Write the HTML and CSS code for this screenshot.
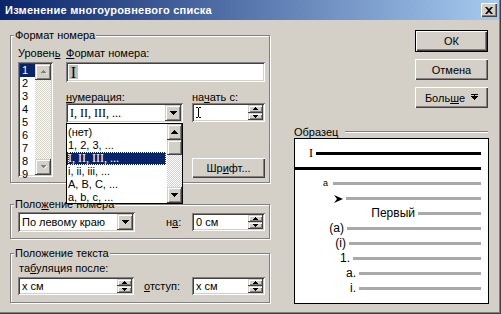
FILE: index.html
```html
<!DOCTYPE html>
<html lang="ru">
<head>
<meta charset="utf-8">
<title>Изменение многоуровневого списка</title>
<link rel="stylesheet" href="styles.css">
</head>
<body>
<div class="win">
  <div class="titlebar">
    <span class="title-text">Изменение многоуровневого списка</span>
    <span class="close raised">
      <svg width="8" height="7" viewBox="0 0 8 7"><path d="M0 0h2l2 2 2-2h2L5 3.5 8 7H6L4 5 2 7H0l3-3.5z" fill="#000"/></svg>
    </span>
  </div>
  <div class="content">
    <div class="left">
      <div class="grp g1">
        <div class="legend">Формат номера</div>
        <div class="g1-body">
          <div class="col-level">
            <div class="lbl">Уровен<u>ь</u></div>
            <div class="listbox sunken">
              <div class="lb-items">
                <div class="lb-item sel">1</div>
                <div class="lb-item">2</div>
                <div class="lb-item">3</div>
                <div class="lb-item">4</div>
                <div class="lb-item">5</div>
                <div class="lb-item">6</div>
                <div class="lb-item">7</div>
                <div class="lb-item">8</div>
                <div class="lb-item">9</div>
              </div>
              <div class="vscroll">
                <div class="sbtn raised2"><svg width="9" height="6" viewBox="0 0 9 6"><path d="M4 1h1v1h1v1h1v1h-5v-1h1v-1h1z" fill="#808080"/><path d="M3 5h5v-1h-1v1z" fill="#fff"/></svg></div>
                <div class="track"></div>
                <div class="sbtn raised2"><svg width="9" height="6" viewBox="0 0 9 6"><path d="M2 1h5v1h-1v1h-1v1h-1v-1h-1v-1h-1z" fill="#808080"/><path d="M5 4h1v-1h1v-1h1v1h-1v1h-1v1h-1z" fill="#fff"/></svg></div>
              </div>
            </div>
          </div>
          <div class="col-format">
            <div class="lbl"><u>Ф</u>ормат номера:</div>
            <div class="field sunken fmt"><span class="fmt-i">I</span></div>
            <div class="num-row">
              <div class="num-col">
                <div class="lbl lbl-s"><u>н</u>умерация:</div>
                <div class="combo sunken">
                  <span class="combo-val serif">I, II, III, ...</span>
                  <span class="dbtn raised2"><svg width="7" height="4" viewBox="0 0 7 4"><path d="M0 0h7v1h-1v1h-1v1h-1v1h-1v-1h-1v-1h-1v-1h-1z" fill="#000"/></svg></span>
                </div>
                <div class="droplist">
                  <div class="dl-items">
                    <div class="dl-item">(нет)</div>
                    <div class="dl-item">1, 2, 3, ...</div>
                    <div class="dl-item sel serif"><span class="focus">I, II, III, ...</span></div>
                    <div class="dl-item">i, ii, iii, ...</div>
                    <div class="dl-item">A, B, C, ...</div>
                    <div class="dl-item">a, b, c, ...</div>
                  </div>
                  <div class="vscroll dl-scroll">
                    <div class="sbtn raised2"><svg width="7" height="4" viewBox="0 0 7 4"><path d="M3 0h1v1h1v1h1v1h1v1h-7v-1h1v-1h1v-1h1z" fill="#000"/></svg></div>
                    <div class="thumb raised2"></div>
                    <div class="track"></div>
                    <div class="sbtn raised2"><svg width="7" height="4" viewBox="0 0 7 4"><path d="M0 0h7v1h-1v1h-1v1h-1v1h-1v-1h-1v-1h-1v-1h-1z" fill="#000"/></svg></div>
                  </div>
                </div>
              </div>
              <div class="start-col">
                <div class="lbl lbl-s">на<u>ч</u>ать с:</div>
                <div class="spin sunken spin-start">
                  <span class="spin-val"><svg width="5" height="11" viewBox="0 0 5 11"><path d="M0 .5h2M3 .5h2M2.5 1v9M0 10.5h2M3 10.5h2" stroke="#000" stroke-width="1" fill="none"/></svg></span>
                  <span class="spin-btns">
                    <span class="spb raised2"><svg width="5" height="3" viewBox="0 0 5 3"><path d="M2 0h1v1h1v1h1v1h-5v-1h1v-1h1z" fill="#000"/></svg></span>
                    <span class="spb raised2"><svg width="5" height="3" viewBox="0 0 5 3"><path d="M0 0h5v1h-1v1h-1v1h-1v-1h-1v-1h-1z" fill="#000"/></svg></span>
                  </span>
                </div>
                <div class="btn raised font-btn">Шр<u>и</u>фт...</div>
              </div>
            </div>
          </div>
        </div>
      </div>

      <div class="grp g2">
        <div class="legend">Поло<u>ж</u>ение номера</div>
        <div class="row-body g2-body">
          <div class="combo sunken combo-align">
            <span class="combo-val">По левому краю</span>
            <span class="dbtn raised2"><svg width="7" height="4" viewBox="0 0 7 4"><path d="M0 0h7v1h-1v1h-1v1h-1v1h-1v-1h-1v-1h-1v-1h-1z" fill="#000"/></svg></span>
          </div>
          <div class="lbl lbl-na">н<u>а</u>:</div>
          <div class="spin sunken">
            <span class="spin-val">0 см</span>
            <span class="spin-btns">
              <span class="spb raised2"><svg width="5" height="3" viewBox="0 0 5 3"><path d="M2 0h1v1h1v1h1v1h-5v-1h1v-1h1z" fill="#000"/></svg></span>
              <span class="spb raised2"><svg width="5" height="3" viewBox="0 0 5 3"><path d="M0 0h5v1h-1v1h-1v1h-1v-1h-1v-1h-1z" fill="#000"/></svg></span>
            </span>
          </div>
        </div>
      </div>

      <div class="grp g3">
        <div class="legend">Положение текста</div>
        <div class="g3-body">
          <div class="lbl lbl-tab">та<u>б</u>уляция после:</div>
          <div class="row-body g3-row">
            <div class="spin sunken spin-tab">
              <span class="spin-val">x см</span>
              <span class="spin-btns">
                <span class="spb raised2"><svg width="5" height="3" viewBox="0 0 5 3"><path d="M2 0h1v1h1v1h1v1h-5v-1h1v-1h1z" fill="#000"/></svg></span>
                <span class="spb raised2"><svg width="5" height="3" viewBox="0 0 5 3"><path d="M0 0h5v1h-1v1h-1v1h-1v-1h-1v-1h-1z" fill="#000"/></svg></span>
              </span>
            </div>
            <div class="lbl lbl-ind"><u>о</u>тступ:</div>
            <div class="spin sunken">
              <span class="spin-val">x см</span>
              <span class="spin-btns">
                <span class="spb raised2"><svg width="5" height="3" viewBox="0 0 5 3"><path d="M2 0h1v1h1v1h1v1h-5v-1h1v-1h1z" fill="#000"/></svg></span>
                <span class="spb raised2"><svg width="5" height="3" viewBox="0 0 5 3"><path d="M0 0h5v1h-1v1h-1v1h-1v-1h-1v-1h-1z" fill="#000"/></svg></span>
              </span>
            </div>
          </div>
        </div>
      </div>
    </div>

    <div class="right">
      <div class="btns">
        <div class="btn raised default">ОК</div>
        <div class="btn raised">Отмена</div>
        <div class="btn raised">Боль<u>ш</u>е <svg class="more-ico" width="7" height="7" viewBox="0 0 7 7"><path d="M0 0h7v1h-7z M3 1h1v1h-1z M0 2h7v1h-1v1h-1v1h-1v1h-1v-1h-1v-1h-1v-1h-1z" fill="#000"/></svg></div>
      </div>
      <div class="sample-head">
        <span>Образец</span>
        <span class="etched"></span>
      </div>
      <div class="preview">
        <div class="prow r1"><span class="mk serif">I</span><span class="ln black"></span></div>
        <div class="prow r2"><span class="mk"></span><span class="ln black"></span></div>
        <div class="prow r3"><span class="mk small">a</span><span class="ln"></span></div>
        <div class="prow r4"><span class="mk"><svg width="9" height="8" viewBox="0 0 9 8"><path d="M0 0L9 4L0 8L3 4Z" fill="#000"/></svg></span><span class="ln"></span></div>
        <div class="prow r5"><span class="mk">Первый</span><span class="ln"></span></div>
        <div class="prow r6"><span class="mk">(a)</span><span class="ln"></span></div>
        <div class="prow r7"><span class="mk">(i)</span><span class="ln"></span></div>
        <div class="prow r8"><span class="mk">1.</span><span class="ln"></span></div>
        <div class="prow r9"><span class="mk">a.</span><span class="ln"></span></div>
        <div class="prow r10"><span class="mk">i.</span><span class="ln"></span></div>
      </div>
    </div>
  </div>
</div>
</body>
</html>
```

FILE: styles.css
```css
* { box-sizing: border-box; }
html, body { margin: 0; padding: 0; }
body {
  width: 501px; height: 314px; overflow: hidden;
  font: 11px "Liberation Sans", Arial, sans-serif;
  color: #000; background: #d4d0c8;
}
u { text-decoration: underline; text-underline-offset: 1px; }
.serif { font-family: "Liberation Serif", "Times New Roman", serif; }

.win {
  width: 501px; height: 314px; background: #d4d0c8;
  display: flex; flex-direction: column;
  box-shadow: inset -1px -1px #404040, inset -2px -2px #808080;
}
.titlebar {
  height: 20px; margin-right: 2px;
  background: linear-gradient(90deg, #0a246a, #a6caf0);
  display: flex; align-items: center; justify-content: space-between;
  padding: 0 2px 0 5px;
  color: #fff; font-weight: bold; font-size: 11px;
}
.title-text { letter-spacing: 0.25px; }
.close {
  width: 16px; height: 14px;
  display: flex; align-items: center; justify-content: center;
  background: #d4d0c8;
}

.raised {
  background: #d4d0c8;
  box-shadow: inset 1px 1px #fff, inset -1px -1px #404040, inset -2px -2px #808080;
}
.raised2 {
  background: #d4d0c8;
  box-shadow: inset -1px -1px #404040, inset 1px 1px #d4d0c8, inset 2px 2px #fff, inset -2px -2px #808080;
}
.sunken {
  background: #fff;
  box-shadow: inset 1px 1px #808080, inset -1px -1px #fff, inset 2px 2px #404040, inset -2px -2px #d4d0c8;
}

.content { display: flex; padding-left: 10px; flex: 1; }
.left { width: 260px; display: flex; flex-direction: column; }

.grp {
  border: 1px solid #808080;
  box-shadow: inset 1px 1px #fff, 1px 1px #fff;
}
.legend {
  width: max-content; height: 13px; line-height: 13px;
  margin: -7px 0 0 3px; padding: 0 1px;
  background: #d4d0c8; white-space: nowrap;
}
.lbl { height: 13px; line-height: 13px; white-space: nowrap; }
.lbl-s { height: 12px; line-height: 12px; }

.g1 { margin-top: 15px; height: 148px; }
.g1-body { display: flex; padding: 5px 0 0 7px; }
.col-level { width: 35px; }
.listbox { margin-top: 2px; height: 115px; display: flex; padding: 2px; }
.lb-items { width: 15px; }
.lb-item { height: 13px; line-height: 13px; padding-left: 2px; }
.sel { background: #0a246a; color: #fff; }
.vscroll { width: 16px; display: flex; flex-direction: column; }
.sbtn { height: 16px; display: flex; align-items: center; justify-content: center; }
.track {
  flex: 1;
  background: repeating-conic-gradient(#d4d0c8 0 25%, #fff 0 50%) 0 0 / 2px 2px;
}
.thumb { height: 15px; }

.col-format { width: 199px; margin-left: 13px; }
.field { height: 20px; }
.fmt { margin-top: 2px; padding: 3px 0 0 3px; }
.fmt-i {
  display: inline-block; height: 14px; width: 9px;
  background: #c0c0c0; text-align: center;
  font: 16px/15px "Liberation Serif", "Times New Roman", serif;
}
.num-row { display: flex; margin-top: 9px; }
.num-col { width: 117px; position: relative; }
.combo { height: 20px; display: flex; align-items: center; padding: 2px; }
.combo-val { flex: 1; padding-left: 2px; white-space: nowrap; overflow: hidden; }
.num-col .combo-val { font-size: 12px; }
.dbtn { width: 16px; height: 16px; display: flex; align-items: center; justify-content: center; }

.droplist {
  position: absolute; left: 0; top: 32px; width: 117px; height: 81px;
  background: #fff; border: 1px solid #000; z-index: 5;
  display: flex;
}
.dl-items { flex: 1; padding-top: 2px; }
.dl-item { height: 13px; line-height: 13px; padding-left: 1px; white-space: nowrap; font-size: 11px; }
.dl-item.serif { font-size: 12px; }
.dl-item.sel { margin-right: 1px; }
.focus { display: block; height: 13px; outline: 1px dotted #fff; outline-offset: -1px; }
.dl-scroll { width: 15px; }

.start-col { width: 73px; margin-left: 9px; }
.spin { height: 19px; display: flex; align-items: center; padding: 2px; width: 73px; }
.spin-val { flex: 1; padding-left: 2px; white-space: nowrap; display: flex; align-items: center; }
.spin-btns { width: 15px; height: 100%; display: flex; flex-direction: column; }
.spb { flex: 1; display: flex; align-items: center; justify-content: center; }
.btn {
  display: flex; align-items: center; justify-content: center;
  white-space: nowrap;
}
.font-btn { margin-top: 36px; height: 20px; width: 73px; }

.g2 { margin-top: 21px; height: 35px; }
.row-body { display: flex; align-items: center; }
.g2-body { padding: 1px 0 0 7px; }
.combo-align { width: 117px; }
.lbl-na { width: 26px; margin-left: 31px; }
.g2 .spin, .g3 .spin { height: 18px; }

.g3 { margin-top: 14px; height: 50px; }
.g3-body { padding: 2px 0 0 7px; }
.lbl-tab { margin-left: 1px; }
.g3-row { margin-top: 2px; }
.spin-tab { width: 116px; }
.lbl-ind { width: 48px; margin-left: 10px; }

.right { margin-left: 24px; width: 195px; display: flex; flex-direction: column; }
.btns { align-self: flex-end; margin: 10px 1px 0 0; display: flex; flex-direction: column; gap: 7px; }
.btns .btn { width: 73px; height: 21px; }
.btns .default {
  height: 22px;
  box-shadow: inset 0 0 0 1px #000, inset 2px 2px #fff, inset -2px -2px #404040, inset -3px -3px #808080;
}
.more-ico { margin-left: 6px; }

.sample-head { margin-top: 17px; height: 13px; display: flex; align-items: center; }
.etched { flex: 1; margin: 0 1px 0 7px; height: 2px; border-top: 1px solid #808080; border-bottom: 1px solid #fff; }

.preview {
  height: 166px; background: #fff; border: 1px solid #000;
  padding: 7px 7px 0 0;
}
.prow { height: 15px; display: flex; align-items: center; }
.mk { text-align: right; padding-right: 3px; font-size: 12px; line-height: 15px; white-space: nowrap; display: flex; justify-content: flex-end; align-items: center; }
.ln { flex: 1; height: 3px; background: #a9a9a9; }
.ln.black { background: #000; }
.small { font-size: 9px; }
.r1 .mk { width: 21px; font-size: 12px; }
.r2 .mk { width: 0; padding: 0; }
.r3 .mk { width: 38px; padding-right: 5px; }
.r4 .mk { width: 51px; padding-right: 3px; }
.r5 .mk { width: 123px; }
.r6 .mk { width: 52px; }
.r7 .mk { width: 54px; }
.r8 .mk { width: 58px; }
.r9 .mk { width: 64px; }
.r10 .mk { width: 64px; }
```
